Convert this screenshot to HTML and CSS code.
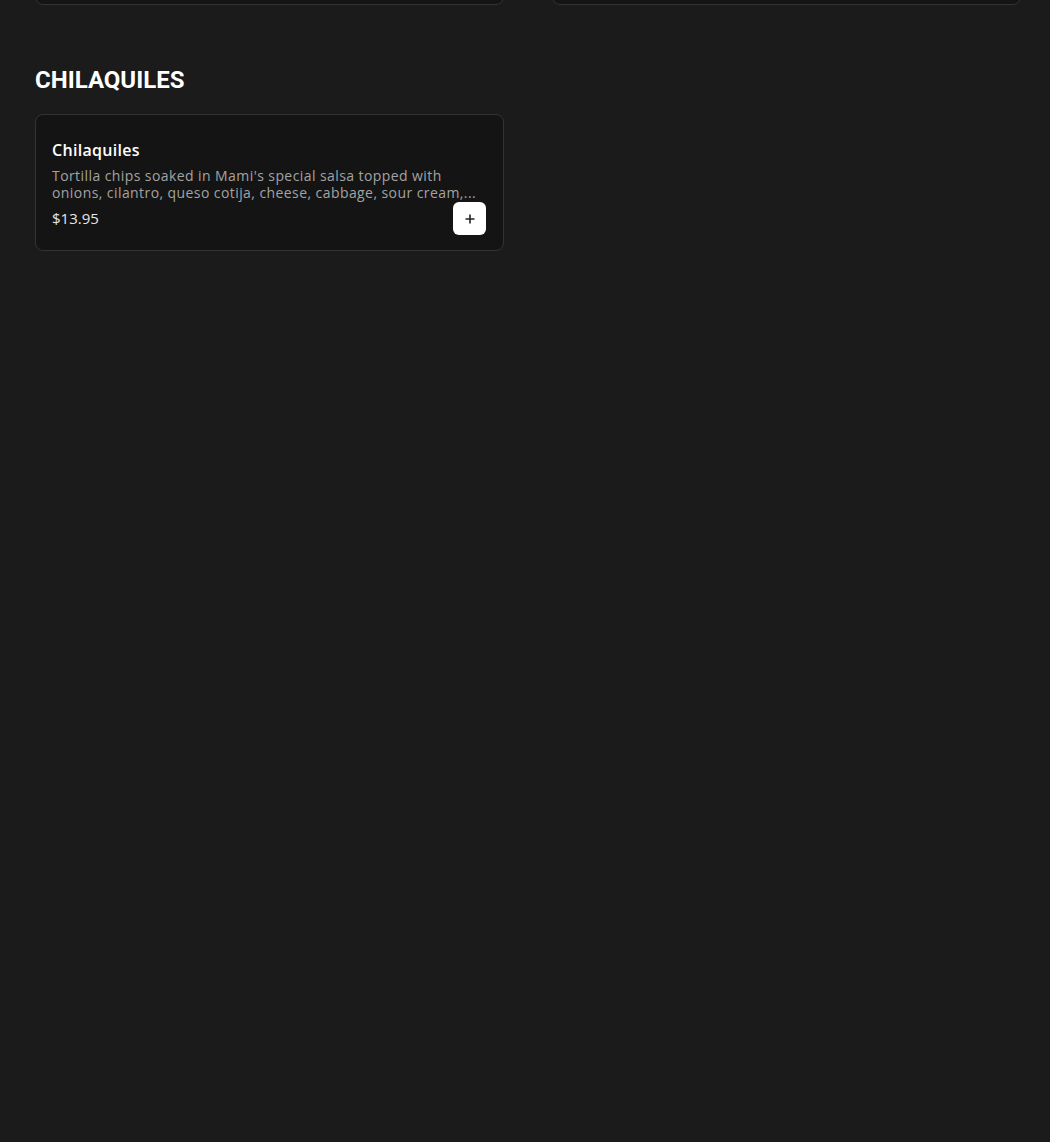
FILE: index.html
```html
<!DOCTYPE html>
<html>
<head>
<meta charset="utf-8">
<link rel="stylesheet" href="styles.css">
</head>
<body>
<div class="page">
  <div class="grid prev">
    <div class="card card-prev"></div>
    <div class="card card-prev"></div>
  </div>
  <section class="section">
    <h2 class="section-title">CHILAQUILES</h2>
    <div class="grid">
      <div class="card item">
        <div class="item-name">Chilaquiles</div>
        <div class="item-desc">Tortilla chips soaked in Mami's special salsa topped with onions, cilantro, queso cotija, cheese, cabbage, sour cream,...</div>
        <div class="item-foot">
          <span class="item-price">$13.95</span>
          <button class="add-btn" aria-label="Add">
            <svg width="12" height="12" viewBox="0 0 12 12"><path d="M6 1.5v9M1.5 6h9" stroke="#222" stroke-width="1.6" fill="none"/></svg>
          </button>
        </div>
      </div>
    </div>
  </section>
</div>
</body>
</html>
```
FILE: styles.css
```css
html, body {
  margin: 0;
  padding: 0;
  background: #1b1b1b;
  height: 100%;
}
body {
  font-family: "Open Sans", "Liberation Sans", sans-serif;
  color: #fff;
}
.page {
  padding: 0 30px 0 35px;
}
.grid {
  display: grid;
  grid-template-columns: 469px 469px;
  column-gap: 48px;
}
.prev {
  margin-top: -95px;
}
.card {
  background: #141414;
  border: 1px solid #333;
  border-radius: 8px;
  box-sizing: border-box;
}
.card-prev {
  height: 100px;
}
.section-title {
  font-family: Roboto, "Liberation Sans", sans-serif;
  font-weight: 700;
  font-size: 24px;
  line-height: 30px;
  margin: 60px 0 19px;
}
.item {
  padding: 25px 17px 14px 16px;
  height: 137px;
}
.item-name {
  font-size: 16px;
  line-height: 20px;
  font-weight: 600;
  letter-spacing: 0.3px;
  margin-bottom: 7px;
}
.item-desc {
  font-size: 14px;
  line-height: 17px;
  color: #a3a3a3;
  font-weight: 400;
  letter-spacing: 0.42px;
}
.item-foot {
  display: flex;
  align-items: center;
  justify-content: space-between;
  margin-top: 1px;
}
.item-price {
  font-size: 15px;
  color: #e6e6e6;
  margin-top: -2px;
}
.add-btn {
  width: 33px;
  height: 33px;
  border: none;
  border-radius: 6px;
  background: #fff;
  display: flex;
  align-items: center;
  justify-content: center;
  padding: 0;
}
```
